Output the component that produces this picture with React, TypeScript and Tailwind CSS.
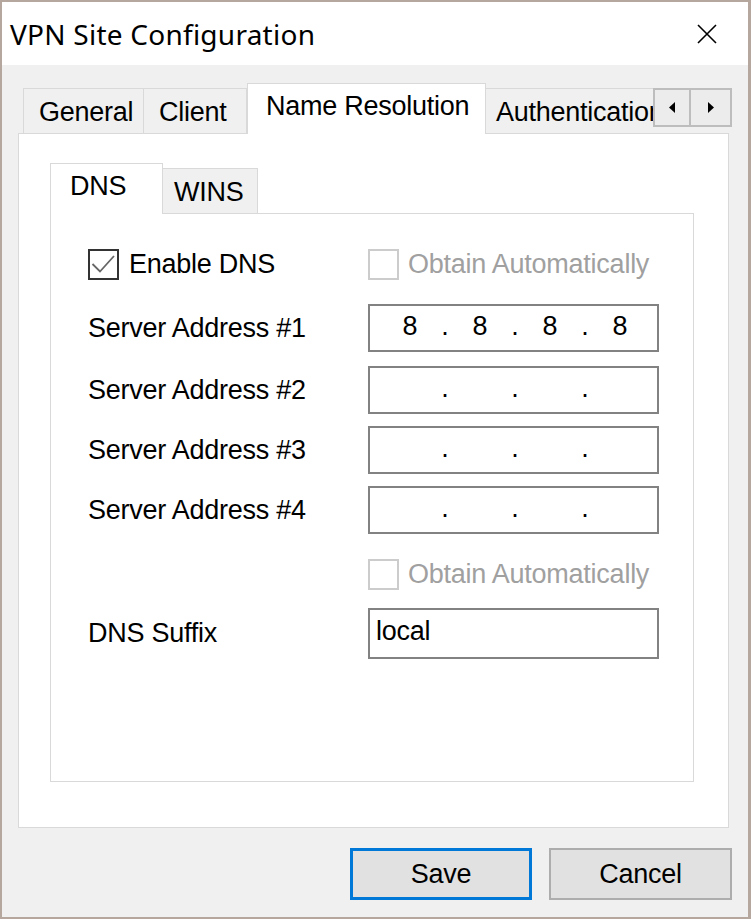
import React from "react";

function CheckBox({ checked, disabled }: { checked?: boolean; disabled?: boolean }) {
  return (
    <div
      className={
        "w-[31px] h-[31px] shrink-0 bg-white flex items-center justify-center " +
        (disabled ? "border-2 border-[#cccccc]" : "border-2 border-[#333333]")
      }
    >
      {checked && (
        <svg width="27" height="27" viewBox="0 0 27 27">
          <path d="M2.5 13 L10 20.5 L24 5" fill="none" stroke="#666666" strokeWidth="1.8" />
        </svg>
      )}
    </div>
  );
}

function IpField({ value }: { value?: string[] }) {
  const v = value ?? ["", "", "", ""];
  return (
    <div className="w-[291px] h-[48px] border-2 border-[#828282] bg-white flex items-center pl-[12px] pb-[4px]">
      <span className="w-[56px] text-center">{v[0]}</span>
      <span className="w-[14px] text-center">.</span>
      <span className="w-[56px] text-center">{v[1]}</span>
      <span className="w-[14px] text-center">.</span>
      <span className="w-[56px] text-center">{v[2]}</span>
      <span className="w-[14px] text-center">.</span>
      <span className="w-[56px] text-center">{v[3]}</span>
    </div>
  );
}

export default function App() {
  return (
    <div className="w-[751px] h-[919px] flex flex-col border-t-2 border-l-2 border-r-[3px] border-b-2 border-[#b5a79e] bg-[#f0f0f0] font-['Liberation_Sans',Arial,sans-serif] text-[27px] tracking-[-0.25px] text-black leading-none">
      <div className="h-[63px] shrink-0 bg-white flex items-center justify-between pl-[8px] pr-[31px]">
        <span className="font-['Noto_Sans',sans-serif] text-[28px] tracking-[0.25px]">VPN Site Configuration</span>
        <svg width="20" height="20" viewBox="0 0 20 20">
          <path d="M1 1 L19 19 M19 1 L1 19" stroke="#000" strokeWidth="1.6" fill="none" />
        </svg>
      </div>
      <div className="flex-1 flex flex-col pt-[18px] pl-[16px]">
        <div className="flex h-[51px] -mb-px relative z-10 w-[714px]">
          <div className="w-[5px] shrink-0" />
          <div className="w-[630px] shrink-0 overflow-hidden flex items-end h-full">
            <div className="w-[121px] shrink-0 h-[45px] mb-px border-t border-l border-r border-[#d9d9d9] bg-[#f0f0f0] flex items-center pl-[15px] pt-[2px]">
              General
            </div>
            <div className="w-[103px] shrink-0 h-[45px] mb-px border-t border-r border-[#d9d9d9] bg-[#f0f0f0] flex items-center pl-[15px] pt-[2px]">
              Client
            </div>
            <div className="w-[239px] shrink-0 h-[51px] border-t border-l border-r border-[#d9d9d9] bg-white flex items-center pl-[18px] pb-[6px]">
              Name Resolution
            </div>
            <div className="w-[200px] shrink-0 h-[45px] mb-px border-t border-[#d9d9d9] bg-[#f0f0f0] flex items-center pl-[10px] pt-[2px] whitespace-nowrap">
              Authentication
            </div>
          </div>
          <div className="flex self-start mt-[5px] shrink-0">
            <div className="w-[38px] h-[39px] border-2 border-[#bdbdbd] bg-[#ececec] flex items-center justify-center">
              <svg width="7" height="11" viewBox="0 0 7 11">
                <path d="M6 0 L0 5.5 L6 11 Z" fill="#000" />
              </svg>
            </div>
            <div className="w-[41px] h-[39px] border-2 border-l-0 border-[#bdbdbd] bg-[#ececec] flex items-center justify-center">
              <svg width="7" height="11" viewBox="0 0 7 11">
                <path d="M1 0 L7 5.5 L1 11 Z" fill="#000" />
              </svg>
            </div>
          </div>
        </div>
        <div className="w-[711px] h-[695px] bg-white border border-[#d9d9d9] pt-[29px] pl-[31px] flex flex-col">
          <div className="flex items-end h-[51px] -mb-px relative z-10">
            <div className="w-[113px] h-[51px] border-t border-l border-r border-[#d9d9d9] bg-white flex items-center pl-[19px] pb-[6px]">
              DNS
            </div>
            <div className="w-[95px] h-[45px] mb-px border-t border-r border-[#d9d9d9] bg-[#f0f0f0] flex items-center pl-[11px] pt-[2px]">
              WINS
            </div>
          </div>
          <div className="w-[644px] h-[569px] border border-[#d9d9d9] bg-white pt-[34px] pl-[37px] flex flex-col">
            <div className="flex items-center h-[33px]">
              <div className="w-[280px] flex items-center gap-[10px]">
                <CheckBox checked />
                <span>Enable DNS</span>
              </div>
              <div className="flex items-center gap-[9px] text-[#a0a0a0]">
                <CheckBox disabled />
                <span>Obtain Automatically</span>
              </div>
            </div>
            <div className="flex items-center mt-[23px]">
              <span className="w-[280px]">Server Address #1</span>
              <IpField value={["8", "8", "8", "8"]} />
            </div>
            <div className="flex items-center mt-[14px]">
              <span className="w-[280px]">Server Address #2</span>
              <IpField />
            </div>
            <div className="flex items-center mt-[12px]">
              <span className="w-[280px]">Server Address #3</span>
              <IpField />
            </div>
            <div className="flex items-center mt-[12px]">
              <span className="w-[280px]">Server Address #4</span>
              <IpField />
            </div>
            <div className="flex items-center mt-[24px] h-[32px]">
              <div className="w-[280px]" />
              <div className="flex items-center gap-[9px] text-[#a0a0a0]">
                <CheckBox disabled />
                <span>Obtain Automatically</span>
              </div>
            </div>
            <div className="flex items-center mt-[18px]">
              <span className="w-[280px]">DNS Suffix</span>
              <div className="w-[291px] h-[51px] border-2 border-[#828282] bg-white flex items-center pl-[6px] pb-[4px]">
                local
              </div>
            </div>
          </div>
        </div>
        <div className="flex justify-end gap-[17px] mt-[20px] w-[714px]">
          <div className="w-[182px] h-[52px] border-[3px] border-[#0078d7] bg-[#e1e1e1] flex items-center justify-center">
            Save
          </div>
          <div className="w-[183px] h-[52px] border-2 border-[#adadad] bg-[#e1e1e1] flex items-center justify-center">
            Cancel
          </div>
        </div>
      </div>
    </div>
  );
}
